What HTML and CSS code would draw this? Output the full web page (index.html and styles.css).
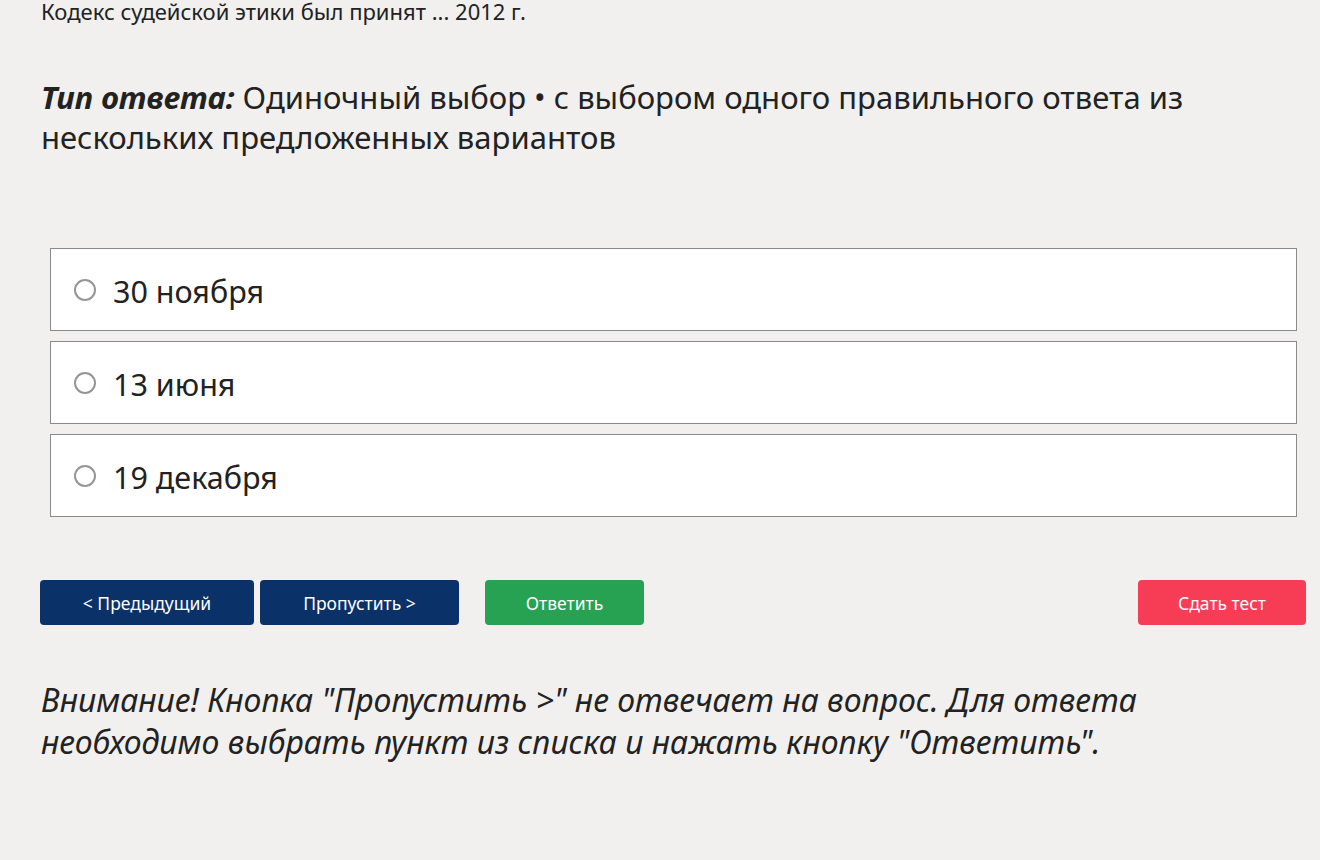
FILE: index.html
```html
<!DOCTYPE html>
<html lang="ru">
<head>
    <meta charset="UTF-8">
    <title>Тест</title>
    <link rel="stylesheet" href="styles.css">
</head>
<body>

<main class="quiz">
    <p class="question">Кодекс судейской этики был принят ... 2012 г.</p>

    <p class="answer-type"><em>Тип ответа:</em> Одиночный выбор • с выбором одного правильного ответа из нескольких предложенных вариантов</p>

    <div class="options">
        <label class="option">
            <input type="radio" name="answer">
            <span>30 ноября</span>
        </label>
        <label class="option">
            <input type="radio" name="answer">
            <span>13 июня</span>
        </label>
        <label class="option">
            <input type="radio" name="answer">
            <span>19 декабря</span>
        </label>
    </div>

    <div class="buttons">
        <button class="btn btn-nav">&lt; Предыдущий</button>
        <button class="btn btn-nav btn-skip">Пропустить &gt;</button>
        <button class="btn btn-answer">Ответить</button>
        <button class="btn btn-finish">Сдать тест</button>
    </div>

    <p class="warning">Внимание! Кнопка "Пропустить &gt;" не отвечает на вопрос. Для ответа необходимо выбрать пункт из списка и нажать кнопку "Ответить".</p>
</main>

</body>
</html>
```

FILE: styles.css
```css
body {
    margin: 0;
    padding: 0;
    background: #f1f0ee;
    font-family: 'Noto Sans', 'Open Sans', sans-serif;
    color: #222;
}
.quiz {
    width: 1266px;
    padding-left: 40px;
}
.question {
    margin: -3px 0 0 1px;
    font-size: 22px;
    line-height: 28px;
}
.answer-type {
    margin: 52px 0 0 1px;
    font-size: 31px;
    line-height: 40px;
    width: 1200px;
}
.answer-type em {
    font-weight: bold;
}
.options {
    margin: 91px 9px 0 10px;
    display: flex;
    flex-direction: column;
    gap: 10px;
}
.option {
    display: flex;
    align-items: center;
    height: 81px;
    background: #fff;
    border: 1px solid #8a8a8a;
    padding-left: 23px;
    font-size: 30.5px;
}
.option input {
    appearance: none;
    margin: 0 17px 0 0;
    width: 22px;
    height: 22px;
    border: 2px solid #959595;
    border-radius: 50%;
    background: #fff;
}
.option span {
    margin-top: 2px;
}
.buttons {
    display: flex;
    margin-top: 63px;
}
.btn {
    height: 45px;
    border: none;
    border-radius: 4px;
    color: #fff;
    font-family: inherit;
    font-size: 17.5px;
    cursor: pointer;
}
.btn-nav {
    background: #0b3169;
    width: 214px;
}
.btn-skip {
    margin-left: 6px;
    width: 199px;
}
.btn-answer {
    background: #27a152;
    width: 159px;
    margin-left: 26px;
}
.btn-finish {
    background: #f73d55;
    width: 168px;
    margin-left: auto;
}
.warning {
    margin: 54px 0 0 1px;
    font-size: 32px;
    line-height: 42px;
    font-style: italic;
    width: 1150px;
}
```
